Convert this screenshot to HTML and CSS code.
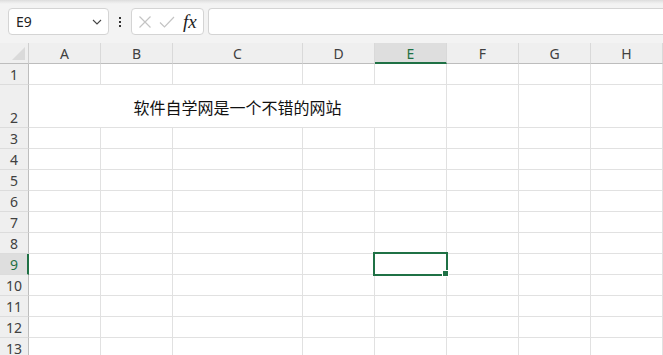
FILE: index.html
```html
<!DOCTYPE html>
<html lang="zh-CN">
<head>
    <meta charset="UTF-8">
    <title>Book1 - Excel</title>
    <link rel="stylesheet" href="styles.css">
</head>
<body>
    <div class="toolbar">
        <div class="name-box">
            <span>E9</span>
            <svg class="chevron" width="10" height="6" viewBox="0 0 10 6"><path d="M1 1 L5 5 L9 1" fill="none" stroke="#444" stroke-width="1.1"/></svg>
        </div>
        <div class="more-dots"><i></i><i></i><i></i></div>
        <div class="fx-buttons">
            <svg width="14" height="14" viewBox="0 0 14 14"><path d="M1.5 1.5 L12.5 12.5 M12.5 1.5 L1.5 12.5" stroke="#c4c4c4" stroke-width="1.2"/></svg>
            <svg width="16" height="14" viewBox="0 0 16 14"><path d="M1 7.5 L5.5 12 L15 2" fill="none" stroke="#c4c4c4" stroke-width="1.2"/></svg>
            <span class="fx">fx</span>
        </div>
        <div class="formula-input"></div>
    </div>

    <div class="sheet head">
        <div class="corner"><span class="tri"></span></div>
        <div class="col-head">A</div>
        <div class="col-head">B</div>
        <div class="col-head">C</div>
        <div class="col-head">D</div>
        <div class="col-head active">E</div>
        <div class="col-head">F</div>
        <div class="col-head">G</div>
        <div class="col-head">H</div>
    </div>
    <div class="sheet body" id="rows"></div>

    <script src="app.js"></script>
</body>
</html>
```

FILE: app.js
```js
// build the grid rows
const rows = document.getElementById('rows');
const cols = 8;

for (let r = 1; r <= 13; r++) {
    const head = document.createElement('div');
    head.className = 'row-head' + (r === 9 ? ' active' : '');
    head.textContent = r;
    rows.appendChild(head);

    if (r === 2) {
        // merged A2:E2, centered text
        const merged = document.createElement('div');
        merged.className = 'cell merged';
        merged.textContent = '软件自学网是一个不错的网站';
        rows.appendChild(merged);
        for (let c = 5; c < cols; c++) {
            const cell = document.createElement('div');
            cell.className = 'cell';
            rows.appendChild(cell);
        }
        continue;
    }

    for (let c = 0; c < cols; c++) {
        const cell = document.createElement('div');
        cell.className = 'cell';
        if (r === 9 && c === 4) {
            cell.classList.add('selected');
            cell.innerHTML = '<span class="sel-box"></span><span class="fill-handle"></span>';
        }
        rows.appendChild(cell);
    }
}
```

FILE: styles.css
```css
body {
    margin: 0;
    width: 663px;
    height: 355px;
    overflow: hidden;
    background-color: #fff;
    font-family: "Noto Sans", "Liberation Sans", sans-serif;
    color: #404040;
}
.toolbar {
    height: 43px;
    box-sizing: border-box;
    background: linear-gradient(#dcdcdc 0, #e9e9e9 2px, #f3f3f3 4px, #f3f3f3 100%);
    display: flex;
    align-items: flex-start;
    padding: 8px 0 0 8px;
}
.name-box {
    width: 101px;
    height: 27px;
    box-sizing: border-box;
    background-color: #fff;
    border: 1px solid #d4d4d4;
    border-radius: 4px;
    display: flex;
    align-items: center;
    justify-content: space-between;
    padding: 0 6px 0 7px;
    font-size: 14px;
    color: #222;
}
.chevron {
    margin-top: 1px;
}
.more-dots {
    width: 22px;
    height: 27px;
    display: flex;
    flex-direction: column;
    align-items: center;
    justify-content: center;
    gap: 2px;
}
.more-dots i {
    width: 2px;
    height: 2px;
    background-color: #333;
}
.fx-buttons {
    width: 73px;
    height: 27px;
    box-sizing: border-box;
    background-color: #fff;
    border: 1px solid #d4d4d4;
    border-radius: 4px;
    display: flex;
    align-items: center;
    gap: 7px;
    padding-left: 6px;
}
.fx {
    font-family: "Liberation Serif", serif;
    font-style: italic;
    font-size: 19px;
    color: #222;
    margin-left: 1px;
    line-height: 1;
}
.formula-input {
    flex: 1;
    margin-left: 4px;
    height: 27px;
    box-sizing: border-box;
    background-color: #fff;
    border: 1px solid #d4d4d4;
    border-right: none;
    border-radius: 4px 0 0 4px;
}
.sheet {
    display: grid;
    grid-template-columns: 29px 72px 72px 130px 72px 72px 72px 72px 72px;
}
.sheet.head {
    grid-template-rows: 21px;
}
.sheet.body {
    grid-template-rows: 21px 43px repeat(11, 21px);
}
.corner,
.col-head,
.row-head,
.cell {
    box-sizing: border-box;
}
.corner {
    background-color: #efefef;
    border-right: 1px solid #cfcfcf;
    border-bottom: 1px solid #bdbdbd;
    position: relative;
}
.corner .tri {
    position: absolute;
    right: 3px;
    bottom: 3px;
    width: 0;
    height: 0;
    border-left: 13px solid transparent;
    border-bottom: 13px solid #dadada;
}
.col-head {
    background-color: #efefef;
    border-right: 1px solid #d9d9d9;
    border-bottom: 1px solid #bdbdbd;
    font-size: 14px;
    display: flex;
    align-items: center;
    justify-content: center;
    padding-top: 1px;
}
.col-head.active {
    background-color: #dedede;
    border-bottom: 2px solid #1f7145;
    color: #1f7145;
    padding-top: 2px;
}
.row-head {
    background-color: #efefef;
    border-right: 1px solid #bdbdbd;
    border-bottom: 1px solid #dcdcdc;
    font-size: 14px;
    display: flex;
    align-items: flex-end;
    justify-content: center;
    line-height: 19px;
}
.row-head.active {
    background-color: #dedede;
    border-right: 2px solid #1f7145;
    color: #1f7145;
    padding-left: 1px;
}
.cell {
    border-right: 1px solid #e1e1e1;
    border-bottom: 1px solid #e1e1e1;
}
.cell.merged {
    grid-column: span 5;
    display: flex;
    align-items: center;
    justify-content: center;
    font-family: "Noto Sans CJK SC", sans-serif;
    font-size: 16px;
    color: #111;
    padding-top: 1px;
}
.selected {
    position: relative;
}
.sel-box {
    position: absolute;
    left: -2px;
    top: -2px;
    width: 75px;
    height: 24px;
    box-sizing: border-box;
    border: 2px solid #1f7145;
}
.fill-handle {
    position: absolute;
    left: 68px;
    top: 17px;
    width: 5px;
    height: 5px;
    background-color: #1f7145;
    outline: 1px solid #fff;
}
```
